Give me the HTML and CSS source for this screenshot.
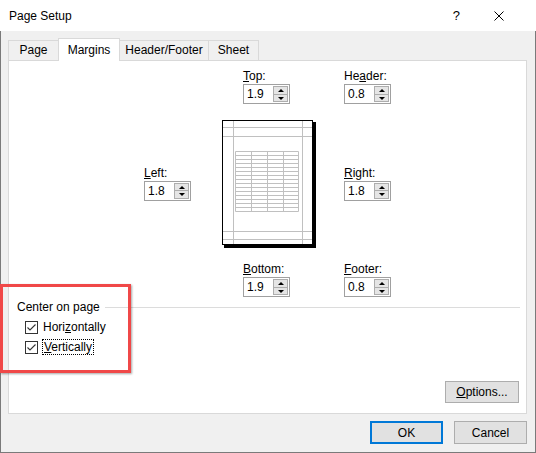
FILE: index.html
```html
<!DOCTYPE html>
<html>
<head>
<meta charset="utf-8">
<title>Page Setup</title>
<link rel="stylesheet" href="styles.css">
</head>
<body>
<div class="window">
  <div class="titlebar">
    <span class="title">Page Setup</span>
    <span class="help">?</span>
    <svg class="close" width="10" height="10" viewBox="0 0 10 10"><path d="M0.5 0.5 L9.5 9.5 M9.5 0.5 L0.5 9.5" stroke="#000" stroke-width="1" fill="none"/></svg>
  </div>
  <div class="body">
    <div class="tabs">
      <div class="tab tab-page">Page</div>
      <div class="tab tab-margins active">Margins</div>
      <div class="tab tab-hf">Header/Footer</div>
      <div class="tab tab-sheet">Sheet</div>
    </div>
    <div class="panel">
      <div class="margins">
        <div class="field f-top">
          <span class="lbl"><u>T</u>op:</span>
          <div class="spin"><span class="val">1.9</span><span class="btns"><span class="up"></span><span class="down"></span></span></div>
        </div>
        <div class="field f-header">
          <span class="lbl">He<u>a</u>der:</span>
          <div class="spin"><span class="val">0.8</span><span class="btns"><span class="up"></span><span class="down"></span></span></div>
        </div>
        <div class="field f-left">
          <span class="lbl"><u>L</u>eft:</span>
          <div class="spin"><span class="val">1.8</span><span class="btns"><span class="up"></span><span class="down"></span></span></div>
        </div>
        <svg class="preview" width="94" height="128" viewBox="0 0 94 128">
          <rect x="2" y="2" width="92" height="126" fill="#000"/>
          <rect x="0.5" y="0.5" width="90" height="124" fill="#fff" stroke="#000"/>
          <g stroke="#c0c0c0" stroke-width="1" fill="none">
            <path d="M11.5 1 V124 M80.5 1 V124 M1 7.5 H90 M1 16.5 H90 M1 111.5 H90 M1 119.5 H90"/>
            <path d="M13.5 31.5 V91.5 M29.5 31.5 V91.5 M45.5 31.5 V91.5 M61.5 31.5 V91.5 M76.5 31.5 V91.5"/>
            <path d="M13.5 31.5 H76.5 M13.5 35.5 H76.5 M13.5 39.5 H76.5 M13.5 43.5 H76.5 M13.5 47.5 H76.5 M13.5 51.5 H76.5 M13.5 55.5 H76.5 M13.5 59.5 H76.5 M13.5 63.5 H76.5 M13.5 67.5 H76.5 M13.5 71.5 H76.5 M13.5 75.5 H76.5 M13.5 79.5 H76.5 M13.5 83.5 H76.5 M13.5 87.5 H76.5 M13.5 91.5 H76.5"/>
          </g>
        </svg>
        <div class="field f-right">
          <span class="lbl"><u>R</u>ight:</span>
          <div class="spin"><span class="val">1.8</span><span class="btns"><span class="up"></span><span class="down"></span></span></div>
        </div>
        <div class="field f-bottom">
          <span class="lbl"><u>B</u>ottom:</span>
          <div class="spin"><span class="val">1.9</span><span class="btns"><span class="up"></span><span class="down"></span></span></div>
        </div>
        <div class="field f-footer">
          <span class="lbl"><u>F</u>ooter:</span>
          <div class="spin"><span class="val">0.8</span><span class="btns"><span class="up"></span><span class="down"></span></span></div>
        </div>
      </div>
      <div class="center-group">
        <div class="legend"><span>Center on page</span><span class="rule"></span></div>
        <label class="check"><span class="box"><svg width="11" height="11" viewBox="0 0 11 11"><path d="M1.5 5.5 L4 8 L9.5 2.5" stroke="#333" stroke-width="1.1" fill="none"/></svg></span><span>Hori<u>z</u>ontally</span></label>
        <label class="check"><span class="box"><svg width="11" height="11" viewBox="0 0 11 11"><path d="M1.5 5.5 L4 8 L9.5 2.5" stroke="#333" stroke-width="1.1" fill="none"/></svg></span><span class="focus"><u>V</u>ertically</span></label>
      </div>
      <div class="panel-foot">
        <button class="btn options"><u>O</u>ptions...</button>
      </div>
    </div>
    <div class="actions">
      <button class="btn ok">OK</button>
      <button class="btn">Cancel</button>
    </div>
  </div>
  <div class="annotation"></div>
</div>
</body>
</html>
```
FILE: styles.css
```css
* { box-sizing: border-box; }
body {
  margin: 0;
  font-family: "Segoe UI", "Liberation Sans", Arial, sans-serif;
  font-size: 12px;
  color: #000;
  background: #fff;
}
u { text-decoration: underline; text-underline-offset: 1px; }
.window { position: relative; width: 536px; height: 453px; overflow: hidden; }

.titlebar {
  height: 31px;
  display: flex;
  align-items: center;
  padding-left: 9px;
  background: #fff;
}
.title { flex: 1; font-size: 12px; }
.help { font-size: 13px; margin-right: 34px; }
.close { margin-right: 32px; }

.body {
  height: 422px;
  background: #f0f0f0;
  border: 1px solid #7a7a7a;
  border-top: 0;
  padding: 7px 8px 0 7px;
}

.tabs {
  display: flex;
  align-items: flex-end;
  height: 22px;
  position: relative;
  z-index: 2;
}
.tab {
  height: 20px;
  border: 1px solid #d9d9d9;
  border-bottom: 0;
  background: #f0f0f0;
  text-align: center;
  line-height: 19px;
  margin-right: -1px;
}
.tab-page { width: 51px; }
.tab-margins { width: 62px; }
.tab-hf { width: 90px; }
.tab-sheet { width: 51px; }
.tab.active {
  height: 23px;
  background: #fff;
  margin-bottom: -1px;
  line-height: 22px;
  position: relative;
  z-index: 3;
}

.panel {
  height: 354px;
  background: #fff;
  border: 1px solid #d9d9d9;
  display: flex;
  flex-direction: column;
}

.margins {
  display: grid;
  grid-template-columns: 78px 122px auto;
  margin: 8px 0 0 135px;
}
.field { display: flex; flex-direction: column; align-items: flex-start; }
.lbl { line-height: 15px; height: 15px; }
.f-top { grid-column: 2; grid-row: 1; margin-left: 21px; }
.f-header { grid-column: 3; grid-row: 1; }
.f-left { grid-column: 1; grid-row: 2; align-self: center; margin-top: 14px; }
.preview { grid-column: 2; grid-row: 2; margin-top: 16px; display: block; }
.f-right { grid-column: 3; grid-row: 2; align-self: center; margin-top: 14px; }
.f-bottom { grid-column: 2; grid-row: 3; margin-left: 21px; margin-top: 14px; }
.f-footer { grid-column: 3; grid-row: 3; margin-top: 14px; }

.spin {
  width: 47px;
  height: 20px;
  border: 1px solid #a0a0a0;
  background: #fff;
  display: flex;
  align-items: center;
  padding-left: 3px;
}
.val { flex: 1; line-height: 18px; }
.btns {
  width: 15px;
  height: 16px;
  margin-right: 1px;
  display: flex;
  flex-direction: column;
  border: 1px solid #adadad;
  background: #e5e5e5;
}
.btns .up, .btns .down {
  flex: 1;
  position: relative;
}
.btns .up { border-bottom: 1px solid #adadad; }
.btns .up::after, .btns .down::after {
  content: "";
  position: absolute;
  left: 4px;
  width: 0;
  height: 0;
  border-left: 3px solid transparent;
  border-right: 3px solid transparent;
}
.btns .up::after { top: 2px; border-bottom: 3px solid #000; }
.btns .down::after { top: 2px; border-top: 3px solid #000; }

.center-group { margin-top: 3px; }
.legend {
  display: flex;
  align-items: center;
  padding-left: 8px;
  line-height: 15px;
}
.rule { flex: 1; height: 1px; background: #dcdcdc; margin: 0 6px 0 5px; }
.check {
  display: flex;
  align-items: center;
  height: 18px;
  padding-left: 16px;
  margin-top: 2px;
}
.check:first-of-type { margin-top: 3px; }
.check .box {
  width: 13px;
  height: 13px;
  border: 1px solid #333;
  background: #fff;
  margin-right: 5px;
  display: flex;
}
.check .box svg { display: block; }
.focus { outline: 1px dotted #000; outline-offset: 0; padding: 0 1px; line-height: 14px; }

.panel-foot {
  margin-top: auto;
  display: flex;
  justify-content: flex-end;
  padding: 0 7px 10px 0;
}
.btn {
  font-family: inherit;
  font-size: 12px;
  color: #000;
  background: #e1e1e1;
  border: 1px solid #adadad;
  width: 73px;
  height: 23px;
  padding: 0;
  margin: 0;
}
.options { width: 74px; height: 22px; }
.actions {
  display: flex;
  justify-content: flex-end;
  gap: 11px;
  margin-top: 7px;
}
.ok { border: 2px solid #0078d7; }

.annotation {
  position: absolute;
  left: 0;
  top: 284px;
  width: 131px;
  height: 89px;
  border: 3px solid #f04848;
  box-shadow: 1px 1px 2px rgba(0,0,0,0.35);
}
```
